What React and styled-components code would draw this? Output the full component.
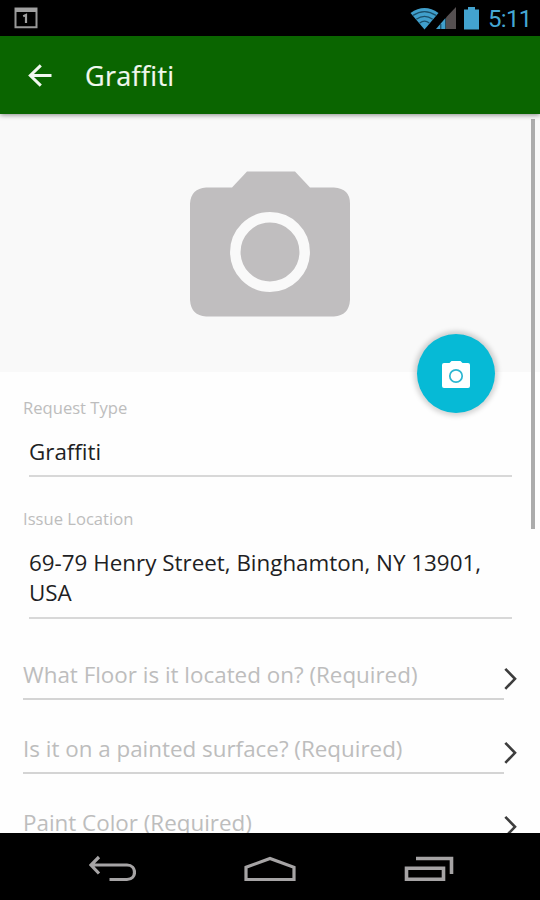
import React from "react";
import styled, { createGlobalStyle } from "styled-components";

const GlobalStyle = createGlobalStyle`
  * { box-sizing: border-box; }
  body { margin: 0; background: #fff; font-family: "Open Sans", "Noto Sans", sans-serif; }
  svg { display: block; flex: none; }
`;

const Screen = styled.div`
  display: flex;
  flex-direction: column;
  width: 540px;
  height: 900px;
  overflow: hidden;
  background: #fefefe;
`;

const StatusBar = styled.div`
  flex: none;
  height: 36px;
  padding: 0 10px 0 14px;
  display: flex;
  align-items: center;
  justify-content: space-between;
  background: #000;
`;

const StatusIcons = styled.div`
  display: flex;
  align-items: center;
`;

const Clock = styled.span`
  width: 42px;
  margin-left: 9px;
  padding-top: 1px;
  font: 400 24px/36px Roboto, sans-serif;
  letter-spacing: -0.7px;
  white-space: nowrap;
  color: #45a8d4;
`;

const AppBar = styled.header`
  flex: none;
  height: 78px;
  padding: 0 26px;
  display: flex;
  align-items: center;
  gap: 31px;
  background: #0a6500;
  box-shadow: 0 1px 5px rgba(0, 0, 0, 0.45);
  z-index: 1;
`;

const Title = styled.h1`
  margin: 0;
  padding-top: 2px;
  font-size: 27px;
  font-weight: 500;
  line-height: 40px;
  letter-spacing: 0.3px;
  -webkit-text-stroke: 0.2px #f1f8ef;
  color: #f1f8ef;
`;

const Content = styled.main`
  position: relative;
  flex: 1;
  min-height: 0;
  overflow: hidden;
`;

const Hero = styled.div`
  height: 258px;
  padding-top: 57px;
  display: flex;
  justify-content: center;
  align-items: flex-start;
  background: #f9f9f9;
`;

const FloatingButton = styled.button`
  position: absolute;
  top: 220px;
  left: 417px;
  width: 78px;
  height: 79px;
  padding: 0;
  border: 0;
  border-radius: 50%;
  display: flex;
  align-items: center;
  justify-content: center;
  background: #06bad6;
  box-shadow: 0 0 5px 3px rgba(0, 0, 0, 0.17);
`;

const ScrollThumb = styled.div`
  position: absolute;
  top: 5px;
  left: 531px;
  width: 4px;
  height: 410px;
  background: #acacac;
`;

const Form = styled.div`
  padding: 26px 23px 0;
`;

const Field = styled.section`
  margin-bottom: ${(p) => p.$gap}px;
`;

const Label = styled.div`
  font-size: 16.6px;
  line-height: 20px;
  color: #bdbdbd;
`;

const Value = styled.div`
  margin: 19px 5px 0 6px;
  padding-bottom: ${(p) => p.$pad}px;
  border-bottom: 2px solid #d8d8d8;
  font-size: 22.4px;
  line-height: 30px;
  color: #1e1f24;
`;

const Row = styled.div`
  display: flex;
  margin-bottom: 34px;
`;

const Prompt = styled.div`
  width: 481px;
  height: 40px;
  flex: none;
  border-bottom: 2px solid #d4d4d4;
  font-size: 22.4px;
  line-height: 30px;
  white-space: nowrap;
  color: #bdbdbd;
`;

const Chevron = styled.svg`
  margin-top: 7px;
`;

const NavBar = styled.nav`
  flex: none;
  height: 67px;
  padding: 20px 86px 0 88px;
  display: flex;
  justify-content: space-between;
  align-items: flex-start;
  background: #000;
`;

const CalendarIcon = () => (
  <svg width="24" height="22" viewBox="0 0 24 22">
    <path d="M1.5 1.5h21v18.7h-21z" fill="none" stroke="#999" strokeWidth="2" />
    <path d="M1 1h22v4H1z" fill="#a0a0a0" />
    <path d="M9.2 9.2 12 8v8" fill="none" stroke="#a0a0a0" strokeWidth="2.2" />
  </svg>
);

const WifiIcon = () => (
  <svg width="29" height="23" viewBox="0 0 29 23">
    <path d="M0.5 6Q14.5-4 28.5 6L14.5 22.5z" fill="#409fcb" />
    <path d="M3 8.4Q14.5 1 26 8.4M6.3 12.2Q14.5 6.6 22.7 12.2M9.7 16Q14.5 12.2 19.3 16" fill="none" stroke="#1b506a" strokeWidth="1.3" />
  </svg>
);

const SignalIcon = styled.svg`
  margin-left: -3px;
`;

const Signal = () => (
  <SignalIcon width="20" height="23" viewBox="0 0 20 23">
    <path d="M10 10.5 20 0v22H10z" fill="#555051" />
    <path d="M0 22 9.5 11v11z" fill="#409fcb" />
    <path d="M4.8 17v5" stroke="#12384b" strokeWidth="1" />
  </SignalIcon>
);

const BatteryIcon = styled.svg`
  margin-left: 8px;
`;

const Battery = () => (
  <BatteryIcon width="15" height="23" viewBox="0 0 15 23">
    <path d="M4 0h7v2.500h4V22.500H0V2.500h4z" fill="#43a3cf" />
  </BatteryIcon>
);

const BackArrow = () => (
  <svg width="28" height="28" viewBox="0 0 28 28">
    <path d="M25.5 14.500H5M14.800 4.300 4.300 14.500l10.500 10.200" fill="none" stroke="#f1f8ef" strokeWidth="3" />
  </svg>
);

const HeroCamera = () => (
  <svg width="160" height="146" viewBox="0 0 160 146">
    <path d="M57 0.500h48l15 16h24q16 1 16 16V129q-1 15.500-16 16.500H16q-15-1-16-16.500V32.500q1-15 16-16h26z" fill="#c0bebf" />
    <circle cx="80" cy="81" r="34.700" fill="none" stroke="#f9f9f9" strokeWidth="10.500" />
  </svg>
);

const SmallCamera = () => (
  <svg width="28" height="28" viewBox="0 0 28 28">
    <path d="M2 3h5.500l2-2h9l2 2H26q2 0 2 2v21q0 2-2 2H2q-2 0-2-2V5q0-2 2-2z" fill="#fff" />
    <circle cx="14" cy="16" r="6.200" fill="none" stroke="#2cb6d1" strokeWidth="1.700" />
  </svg>
);

const ChevronIcon = () => (
  <Chevron width="14" height="24" viewBox="0 0 14 24">
    <path d="m1.300 1.800 9.700 10-9.700 10" fill="none" stroke="#3d3d3d" strokeWidth="2.600" />
  </Chevron>
);

const NavBack = () => (
  <svg width="48" height="32" viewBox="0 0 48 32">
    <path d="M3 12h36c10 0 10 14.500 0 14.500H21.500M11 4 3 12l8 8.500" fill="none" stroke="#a6a4a5" strokeWidth="3.200" />
  </svg>
);

const NavHome = () => (
  <svg width="52" height="32" viewBox="0 0 52 32">
    <path d="M2 14.300 26 5.500l24 8.800v12.200H2z" fill="none" stroke="#a6a4a5" strokeWidth="3.200" />
  </svg>
);

const NavRecent = () => (
  <svg width="50" height="32" viewBox="0 0 50 32">
    <path d="M2.500 15.300h37v10.900h-37zM12 5.500h35.500v15.500" fill="none" stroke="#a6a4a5" strokeWidth="3.600" />
  </svg>
);

const questions = [
  "What Floor is it located on? (Required)",
  "Is it on a painted surface? (Required)",
  "Paint Color (Required)",
];

export default function App() {
  return (
    <>
      <GlobalStyle />
      <Screen>
        <StatusBar>
          <CalendarIcon />
          <StatusIcons>
            <WifiIcon />
            <Signal />
            <Battery />
            <Clock>5:11</Clock>
          </StatusIcons>
        </StatusBar>
        <AppBar>
          <BackArrow />
          <Title>Graffiti</Title>
        </AppBar>
        <Content>
          <Hero><HeroCamera /></Hero>
          <Form>
            <Field $gap={32}>
              <Label>Request Type</Label>
              <Value $pad={8}>Graffiti</Value>
            </Field>
            <Field $gap={41}>
              <Label>Issue Location</Label>
              <Value $pad={9}>69-79 Henry Street, Binghamton, NY 13901, USA</Value>
            </Field>
            {questions.map((text) => (
              <Row key={text}>
                <Prompt>{text}</Prompt>
                <ChevronIcon />
              </Row>
            ))}
          </Form>
          <FloatingButton aria-label="Take photo"><SmallCamera /></FloatingButton>
          <ScrollThumb />
        </Content>
        <NavBar>
          <NavBack />
          <NavHome />
          <NavRecent />
        </NavBar>
      </Screen>
    </>
  );
}
